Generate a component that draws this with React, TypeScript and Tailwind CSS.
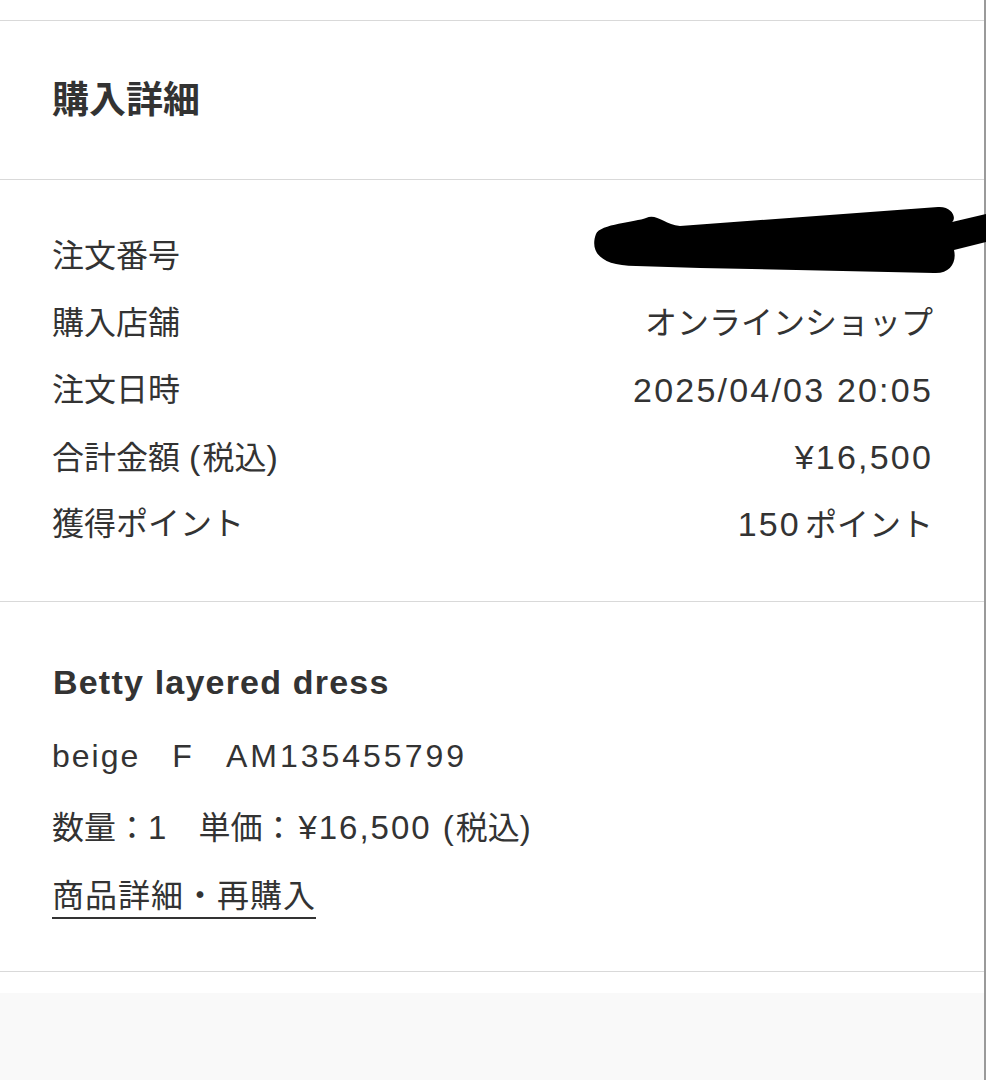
import React from 'react';

const jp = '"Liberation Sans", "Noto Sans CJK JP", sans-serif';

const L: React.FC<{ children: React.ReactNode; className?: string }> = ({ children, className = '' }) => (
  <span className={`text-[34px] tracking-[2.2px] ${className}`}>{children}</span>
);

const rows: { label: React.ReactNode; value: React.ReactNode }[] = [
  { label: '注文番号', value: '' },
  { label: '購入店舗', value: 'オンラインショップ' },
  { label: '注文日時', value: <L>2025/04/03 20:05</L> },
  {
    label: (
      <>
        合計金額 <L className="tracking-[0px]">(</L>税込<L className="tracking-[0px]">)</L>
      </>
    ),
    value: <L className="tracking-[1px]">¥16,500</L>,
  },
  {
    label: '獲得ポイント',
    value: (
      <>
        <L className="tracking-[1.5px] mr-[4px]">150</L>ポイント
      </>
    ),
  },
];

export default function App() {
  return (
    <div className="relative flex w-[986px] min-h-[1080px] bg-white text-[#333333]" style={{ fontFamily: jp }}>
      <div className="w-[986px] border-r-2 border-[#9a9a9a] flex flex-col">
        <div className="h-[20px] shrink-0" />

        {/* header */}
        <section className="h-[159px] border-t border-[#d9d9d9] flex items-center px-[52px]">
          <h1 className="text-[37px] font-bold leading-none">購入詳細</h1>
        </section>

        {/* order info */}
        <section className="border-t border-[#d9d9d9] pt-[42px] pb-[44px] pl-[52px] pr-[51px]">
          {rows.map((r, i) => (
            <div key={i} className="h-[67px] flex items-center justify-between text-[32px] leading-none">
              <span>{r.label}</span>
              <span>{r.value}</span>
            </div>
          ))}
        </section>

        {/* item */}
        <section className="border-t border-[#d9d9d9] pt-[44px] pb-[52px] px-[52px] text-[32px] leading-none">
          <div className="h-[72px] flex items-center">
            <span className="text-[34px] font-bold tracking-[1.2px] ml-[1px]">Betty layered dress</span>
          </div>
          <div className="h-[75px] flex items-center">
            <span className="text-[32px] tracking-[2px]">beige</span>
            <span>　</span>
            <span className="text-[32px] tracking-[2px]">F</span>
            <span>　</span>
            <span className="text-[32px] tracking-[3px]">AM135455799</span>
          </div>
          <div className="h-[69px] flex items-center">
            <span>数量：</span>
            <span className="text-[33px]">1</span>
            <span>　単価：</span>
            <span className="text-[33px] tracking-[2px] ml-[4px]">¥16,500 (</span>
            <span>税込</span>
            <span className="text-[33px]">)</span>
          </div>
          <div className="pt-[18px]">
            <span className="inline-block leading-[32px] pb-[5px] border-b-2 border-[#333333] tracking-[1px]">
              商品詳細・再購入
            </span>
          </div>
        </section>

        <div className="border-t border-[#d9d9d9] h-[22px] bg-white" />
        <div className="flex-1 bg-[#f9f9f9]" />
      </div>

      {/* redaction scribble over the order number */}
      <svg
        className="absolute left-0 top-0 pointer-events-none"
        width="986"
        height="300"
        viewBox="0 0 986 300"
      >
        <path
          d="M596 234 C600 224 636 222 646 218 C656 213 664 224 680 226 L938 207 C952 206 957 218 952 222 L986 214 L986 242 L954 250 C957 262 950 274 934 273 L700 268 L636 266 C598 266 590 250 596 234 Z"
          fill="#000"
        />
      </svg>
    </div>
  );
}
